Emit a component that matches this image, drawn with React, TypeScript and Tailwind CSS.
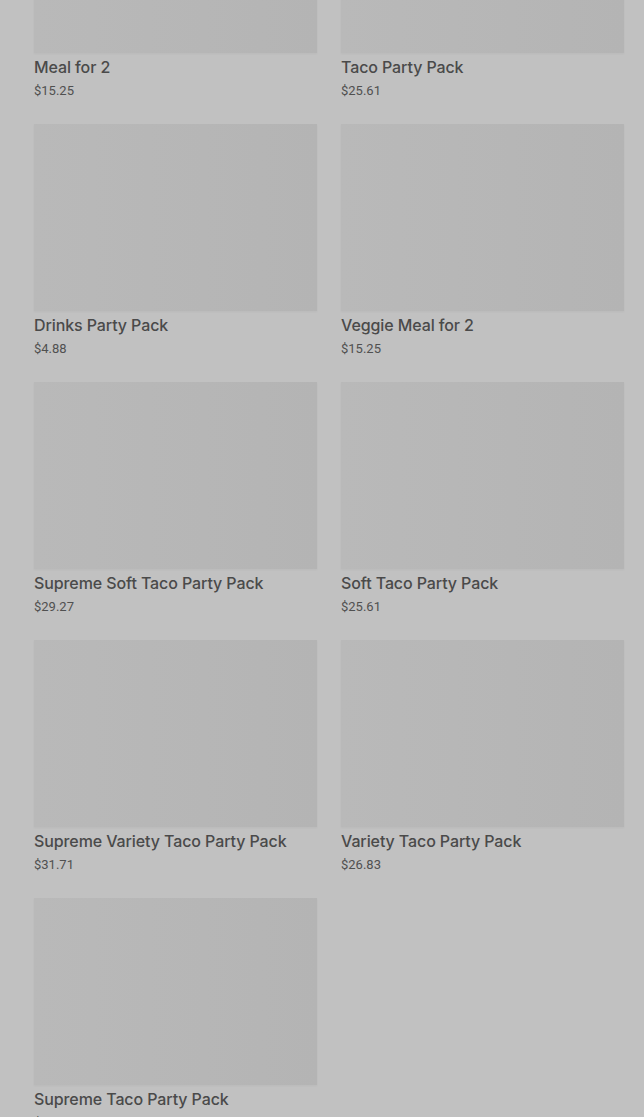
const items = [
  { name: "Meal for 2", price: "$15.25" },
  { name: "Taco Party Pack", price: "$25.61" },
  { name: "Drinks Party Pack", price: "$4.88" },
  { name: "Veggie Meal for 2", price: "$15.25" },
  { name: "Supreme Soft Taco Party Pack", price: "$29.27" },
  { name: "Soft Taco Party Pack", price: "$25.61" },
  { name: "Supreme Variety Taco Party Pack", price: "$31.71" },
  { name: "Variety Taco Party Pack", price: "$26.83" },
  { name: "Supreme Taco Party Pack", price: "$29.27" },
];

export default function App() {
  return (
    <div className="h-[1117px] overflow-hidden bg-[#c1c1c1] font-['Roboto',sans-serif]">
      <div className="mt-[-134px] grid grid-cols-2 gap-x-[24px] gap-y-[24px] pl-[34px] pr-[20px]">
        {items.map((it) => (
          <div key={it.name}>
            <div className="h-[187px] bg-gradient-to-r from-[#b9b9b9] to-[#b4b4b4] shadow-[0_1px_2px_rgba(0,0,0,0.04)]" />
            <div className="mt-[4px] font-['Inter',sans-serif] text-[16px] leading-[20px] font-medium tracking-[-0.1px] text-[#4a4a4a]">{it.name}</div>
            <div className="mt-[5px] text-[13px] leading-[18px] text-[#505050]">{it.price}</div>
          </div>
        ))}
      </div>
    </div>
  );
}
